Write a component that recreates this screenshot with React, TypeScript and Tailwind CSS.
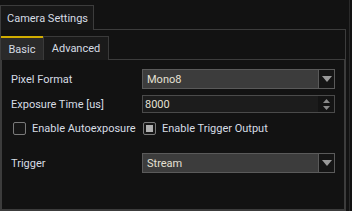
import React from "react";

const font = { fontFamily: 'Roboto, "Liberation Sans", sans-serif' };

const Combo = ({ value }: { value: string }) => (
  <div className="flex h-[20px] w-[193px] border border-[#5a5a5a] bg-[#3c3c3c]">
    <div className="flex flex-1 items-center pl-[4px] text-[11px] leading-none text-[#e4e0d4]">{value}</div>
    <div className="flex w-[16px] items-center justify-center border-l border-[#5a5a5a] bg-[#151515]">
      <svg width="10" height="6" viewBox="0 0 10 6">
        <path d="M0 0 H10 L5 6 Z" fill="#9a9a9a" />
      </svg>
    </div>
  </div>
);

const Spin = ({ value }: { value: string }) => (
  <div className="flex h-[18px] w-[193px] border border-[#4a4a4a] bg-[#1c1c1c]">
    <div className="flex flex-1 items-center pl-[2px] text-[11px] leading-none text-[#e4e0d4]">{value}</div>
    <div className="flex w-[16px] flex-col items-center justify-center gap-[3px] bg-[#141414]">
      <svg width="7" height="4" viewBox="0 0 7 4">
        <path d="M0 4 H7 L3.5 0 Z" fill="#8a8a8a" />
      </svg>
      <svg width="7" height="4" viewBox="0 0 7 4">
        <path d="M0 0 H7 L3.5 4 Z" fill="#8a8a8a" />
      </svg>
    </div>
  </div>
);

const Check = ({ checked, label }: { checked?: boolean; label: string }) => (
  <div className="flex h-[14px] items-center gap-[6px] whitespace-nowrap">
    <div className="flex h-[13px] w-[13px] items-center justify-center rounded-[2px] border border-[#7a7a7a] bg-[#161616]">
      {checked && <div className="h-[7px] w-[7px] bg-[#b0b0b0]" />}
    </div>
    <span className="text-[11px] leading-none text-[#d6dce4]">{label}</span>
  </div>
);

const Label = ({ children }: { children: React.ReactNode }) => (
  <span className="w-[131px] text-[11px] leading-none text-[#d6dce4]">{children}</span>
);

export default function App() {
  return (
    <div className="flex h-[211px] w-[352px] overflow-hidden bg-[#121212]" style={font}>
      <div className="flex h-[211px] w-[346px] flex-col pt-[5px]">
        {/* outer tabs */}
        <div className="flex h-[25px] shrink-0">
          <div className="flex w-[94px] items-center border border-b-0 border-[#3c3c3c] bg-[#181818] pl-[6px] text-[11px] leading-none whitespace-nowrap text-[#d6dce4]">
            Camera Settings
          </div>
          <div className="flex-1 border-b border-[#3c3c3c]" />
        </div>
        {/* outer pane */}
        <div className="flex h-[181px] flex-col border-x border-b border-[#3c3c3c] pt-[6px]">
          <div className="flex h-[24px] shrink-0">
            <div className="flex w-[42px] items-center justify-center border-t-2 border-[#d0ac00] bg-[#2a2a2a] text-[11px] leading-none text-[#d6dce4]">
              Basic
            </div>
            <div className="flex w-[66px] items-center justify-center border border-b-0 border-[#3a3a3a] bg-[#1a1a1a] text-[11px] leading-none text-[#d6dce4]">
              Advanced
            </div>
            <div className="flex-1 border-b border-[#3c3c3c]" />
          </div>
          {/* inner pane */}
          <div className="flex flex-1 flex-col border-x border-b border-[#3c3c3c] pl-[9px] pt-[9px]">
            <div className="flex h-[20px] items-center">
              <Label>Pixel Format</Label>
              <Combo value="Mono8" />
            </div>
            <div className="mt-[6px] flex h-[18px] items-center">
              <Label>Exposure Time [us]</Label>
              <Spin value="8000" />
            </div>
            <div className="mt-[8px] flex h-[14px] items-center pl-[2px]">
              <div className="w-[130px]">
                <Check label="Enable Autoexposure" />
              </div>
              <Check checked label="Enable Trigger Output" />
            </div>
            <div className="mt-[18px] flex h-[20px] items-center">
              <Label>Trigger</Label>
              <Combo value="Stream" />
            </div>
          </div>
        </div>
      </div>
      <div className="ml-[3px] w-[1px] bg-[#2a2a2a]" />
    </div>
  );
}
